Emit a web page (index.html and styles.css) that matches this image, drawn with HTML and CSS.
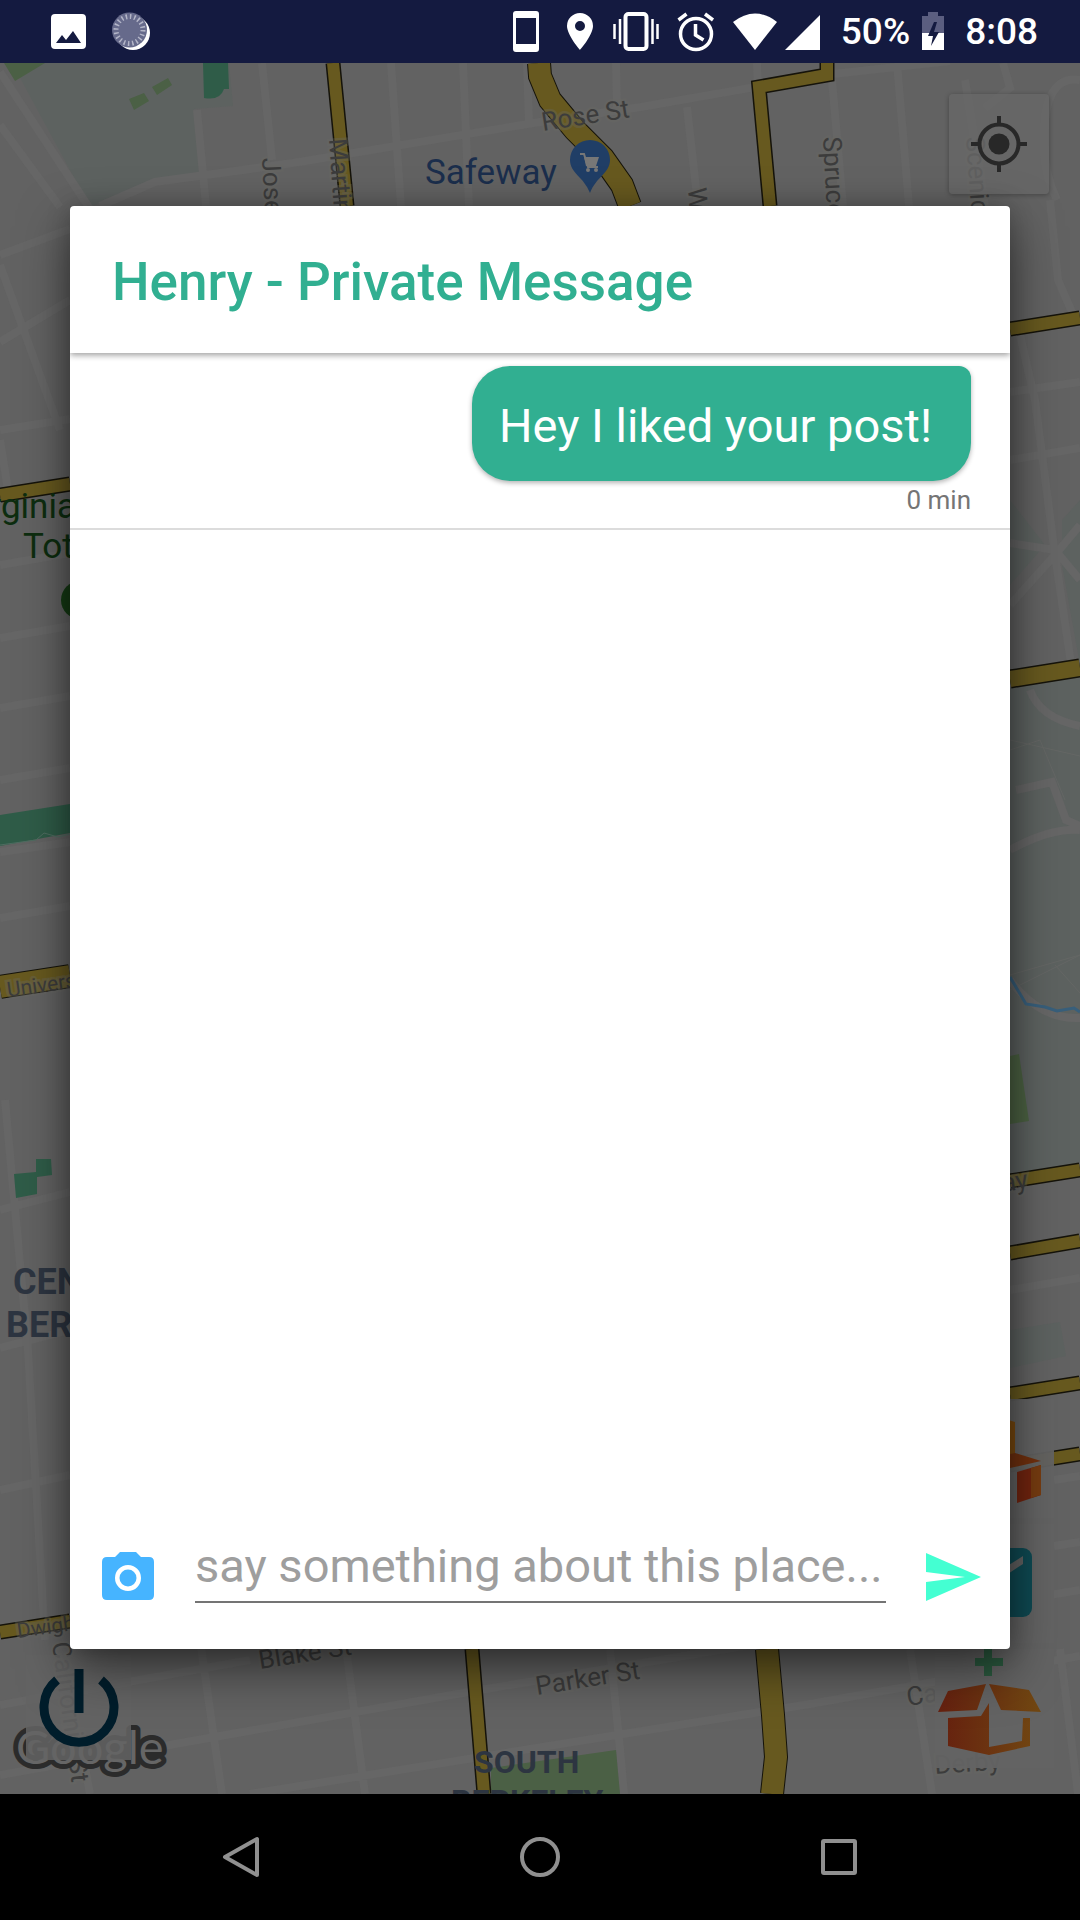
FILE: index.html
```html
<!DOCTYPE html>
<html lang="en">
<head>
<meta charset="utf-8">
<meta name="viewport" content="width=device-width, initial-scale=1">
<title>Henry - Private Message</title>
<link rel="stylesheet" href="styles.css">
</head>
<body>
<header class="status">
  <div class="status-group status-left">
    <svg width="36" height="63" viewBox="51 0 36 63" aria-hidden="true"><path fill="#fff" fill-rule="evenodd" d="M55 14h27q4 0 4 4v27q0 4-4 4H55q-4 0-4-4V18q0-4 4-4zM56 43h25L73 31l-7 9-4-5z"/></svg>
    <svg width="40" height="63" viewBox="112 0 40 63" aria-hidden="true"><circle cx="133" cy="33" r="17" fill="#fff"/><circle cx="129.500" cy="30" r="17.500" fill="#666a8b"/><circle cx="129.500" cy="30" r="13.500" fill="none" stroke="#b4b6c8" stroke-width="5" stroke-dasharray="1.500 2.740"/></svg>
  </div>
  <div class="status-group status-right">
    <div class="status-group status-icons">
      <svg width="42" height="63" viewBox="505 0 42 63" aria-hidden="true"><path fill="#fff" fill-rule="evenodd" d="M516 11h20q3 0 3 3v35q0 3-3 3h-20q-3 0-3-3V14q0-3 3-3zM516 18v26h20V18z"/></svg>
      <svg width="42" height="63" viewBox="559 0 42 63" aria-hidden="true"><path fill="#fff" fill-rule="evenodd" d="M580 13a13 13 0 0 1 13 13c0 9-13 24-13 24s-13-15-13-24a13 13 0 0 1 13-13zM580 21a5 5 0 1 0 0 10 5 5 0 0 0 0-10z"/></svg>
      <svg width="46" height="63" viewBox="613 0 46 63" aria-hidden="true"><rect x="625.500" y="14" width="21" height="35" rx="3" fill="none" stroke="#fff" stroke-width="4"/><path stroke="#fff" stroke-width="2.500" d="M620 19v25M614.500 24v15M652.500 19v25M657.500 24v15"/></svg>
      <svg width="50" height="63" viewBox="671 0 50 63" aria-hidden="true"><g fill="none" stroke="#fff" stroke-width="3.500"><circle cx="696" cy="34" r="15.500"/><path d="M695.500 24v11l8 5M678.500 20l8-6M713 20l-8-6"/></g></svg>
      <div class="status-group status-signal">
        <svg width="44" height="63" viewBox="733 0 44 63" aria-hidden="true"><path fill="#fff" d="M733 22q22-17 44 0l-22 28z"/></svg>
        <svg width="35" height="63" viewBox="785 0 35 63" aria-hidden="true"><path fill="#fff" d="M820 15v35h-35z"/></svg>
      </div>
    </div>
    <div class="status-group status-battery">
      <span>50%</span>
      <svg width="22" height="63" viewBox="923 0 22 63" aria-hidden="true"><path fill="#5b5e80" d="M929 12h10v4h6v17h-22V16h6z"/><path fill="#fff" d="M923 33h22v17h-22z"/><path fill="#141a40" d="M935 22l-6 14h5l-2 10 8-14h-5l3-10z"/></svg>
    </div>
    <time>8:08</time>
  </div>
</header>

<main class="stage">
  <svg class="map" viewBox="0 63 1080 1731" preserveAspectRatio="xMidYMid slice" aria-hidden="true">
    <!-- parks -->
    <g fill="#5d6260">
      <path d="M12 63h217l4 43-39 3 9 62-52 10-61 26z"/>
      <path d="M1010 500l35 45-35 40zM1062 520l18-20v165l-18-100zM1010 688l70-11v486l-70 12z"/>
      <path d="M1010 1330l50-8 6 34-56 12z"/>
    </g>
    <!-- streets -->
    <g class="streets">
      <path d="M0 72l92 140M0 125l60 82M262 63l10 97M391 63l10 143M463 63l6 143M527 63l2 60M100 206l55-24 138-19 247-41 101-15 183-32 126-14M197 110l9 96M616 63l1 44M687 107l11 99M757 63l1 30M832 80l11 126M897 63l12 143M965 80l20 126M1003 63l7 25-25 20M1080 80q-30-5-35 40t12 80"/>
      <path d="M0 255l70-26M0 342l70-42M0 265l60 165M0 430l70-11M0 440l8 50M0 565l70-12M0 638l70-12M0 708l70-12M0 780l70-12M0 852l70-10M0 918l70-12M5 1100l23 250 17 290M0 1210l70-18M0 1348l70-18M0 1490l70-15"/>
      <path d="M1050 200l8 80 14 32M1020 335l15 65 20 155 17 115M1010 392l70-10M1010 460l70-12M1010 605l45-50 25-30M1010 543l45 7 25 30M1030 690q10 28 50 36M1010 850q40-22 70-20M1016 790l36-8 14 38 14 6M1010 980q30 40 70 38M1010 1290l70-12M1054 1480l26-4M1054 1546l26-4"/>
      <path d="M0 1705l250-45M0 1775l480-85 600-100M250 1794l560-90 270-48M200 1640l22 154M345 1640l20 154M610 1649l10 100 4 45M910 1649l22 145M1060 1649l18 145M80 1740l10 54"/>
    </g>
    <g fill="none" stroke="#656765" stroke-width="1"><path d="M1010 740l70 16M1010 750l30-10 25 60M1010 975l70-20M1010 990l70-35M1055 965l25 28"/></g>
    <!-- green areas -->
    <path fill="#4b6045" d="M4 63h41l-30 18zM129 99l15-6 5 8-15 9zM152 87l16-9 4 7-15 10zM491 1768l125-18 4 44H491z"/>
    <path fill="#4c6243" d="M1010 1056l9-2 10 67-19 3z"/>
    <path fill="#2f5c48" d="M203 63h25l1 26h-5q-4 12-20 9zM0 815l70-11v29l-70 13zM14 1174l22-2v-13h15l1 16-15 2v17l-21 4z"/>
    <path fill="none" stroke="#4f6d61" d="M0 845l36-5 8-7 14 4 12-3"/>
    <path fill="none" stroke="#385f7b" stroke-width="3" d="M1010 977l16 27 19 3 12 4 17-3 6 4"/>
    <!-- arterials: dark casing, then fill -->
    <g class="casing">
      <path class="w14" d="M333 63l14 143M827 63v12l-68 12 11 119M0 495l70-11M0 1632l70-11M1010 329l70-11M1010 1181l70-11M1010 1253l70-12M1010 1394l70-11M1010 1465l70-11M472 1649l12 145"/>
      <path class="w22" d="M539 63l1 13 10 24 25 30 28 28 19 27 8 21M0 987l70-11M767 1649l6 66 3 42-4 37"/>
      <path class="w18" d="M1010 679l70-11"/>
    </g>
    <g class="arterial">
      <path class="w14" d="M333 63l14 143M827 63v12l-68 12 11 119M0 495l70-11M0 1632l70-11M1010 329l70-11M1010 1181l70-11M1010 1253l70-12M1010 1394l70-11M1010 1465l70-11M472 1649l12 145"/>
      <path class="w22" d="M539 63l1 13 10 24 25 30 28 28 19 27 8 21M0 987l70-11M767 1649l6 66 3 42-4 37"/>
      <path class="w18" d="M1010 679l70-11"/>
    </g>
    <!-- street names -->
    <g class="street-name">
      <text transform="translate(543 131) rotate(-9)">Rose St</text>
      <text transform="translate(262 158) rotate(87)">Josephine St</text>
      <text transform="translate(329 139) rotate(86)">Martin Luther</text>
      <text transform="translate(823 137) rotate(87)">Spruce St</text>
      <text transform="translate(688 188) rotate(86)">Walnut St</text>
      <text transform="translate(966 137) rotate(86)">Scenic</text>
      <text class="small" transform="translate(8 997) rotate(-8)">University</text>
      <text class="small" transform="translate(18 1638) rotate(-8)">Dwight Way</text>
      <text transform="translate(52 1643) rotate(82)">California St</text>
      <text transform="translate(260 1669) rotate(-9)">Blake St</text>
      <text transform="translate(537 1695) rotate(-9)">Parker St</text>
      <text transform="translate(908 1706) rotate(-9)">C<tspan fill="#5c5c5c">a</tspan></text>
      <text transform="translate(935 1774) rotate(-4)">Derby</text>
      <text transform="translate(1003 1192) rotate(-9)">ay</text>
    </g>
    <g class="place">
      <text class="shop" x="425" y="184">Safeway</text>
      <text class="garden" x="76" y="518" text-anchor="end">Virginia</text>
      <text class="garden" x="23" y="558">Tot Lot</text>
      <text class="district" x="13" y="1294">CENTRAL</text>
      <text class="district" x="6" y="1337">BERKELEY</text>
      <text class="district compact" x="474" y="1773">SOUTH</text>
      <text class="district compact" x="451" y="1812">BERKELEY</text>
    </g>
    <circle cx="80" cy="600" r="19" fill="#153b14"/>
    <path fill="#203e66" d="M590 140a20 20 0 0 1 20 20c0 13-14 17-20 33-6-16-20-20-20-33a20 20 0 0 1 20-20z"/>
    <path fill="#777" d="M584 157h15l-3 9h-10z"/><path fill="none" stroke="#777" stroke-width="2" d="M580 154h4l4 13h10"/><circle cx="588" cy="170" r="2" fill="#777"/><circle cx="596" cy="170" r="2" fill="#777"/>
    <text class="brand" x="16" y="1764">Google</text>
  </svg>

  <button class="map-button locate" type="button" aria-label="My location">
    <svg width="56" height="56" viewBox="-28 -28 56 56"><circle r="19.500" fill="none" stroke="#282828" stroke-width="4"/><circle r="10.500" fill="#282828"/><path stroke="#282828" stroke-width="4" d="M0-28v9M0 28v-9M-28 0h9M28 0h-9"/></svg>
  </button>
  <button class="map-button power" type="button" aria-label="Log out">
    <svg width="80" height="80" viewBox="-40 -40 80 80"><path fill="none" stroke="#001d2b" stroke-width="9" d="M-22-28a35 35 0 1 0 44 0M0-39V5"/></svg>
  </button>
  <div class="map-actions">
    <button class="map-button" type="button" aria-label="Parcels">
      <svg width="119" height="119" viewBox="935 1398 119 119"><path fill="#7a4a10" d="M966 1421l22-8 27 8v32h-49z"/><path fill="#70300e" d="M989 1458l26-6 26 8-31 7z"/><path fill="#70240f" d="M1017 1471l24-7v30l-24 8z"/><path fill="#753b10" d="M1031 1467l10-3v30l-10 3z"/><path fill="#66220f" d="M937 1460l70 8v34l-70-10z"/></svg>
    </button>
    <button class="map-button" type="button" aria-label="Messages">
      <svg width="119" height="119" viewBox="935 1523 119 119"><rect x="945" y="1547" width="87" height="69" rx="9" fill="#0f4a53"/><path fill="#626262" d="M954 1555l34 22 35-22v8l-35 23-34-23z"/></svg>
    </button>
    <button class="map-button" type="button" aria-label="Add parcel">
      <svg width="119" height="119" viewBox="935 1649 119 119">
        <defs><linearGradient id="parcel"><stop offset="0" stop-color="#66200f"/><stop offset="1" stop-color="#714812"/></linearGradient></defs>
        <path fill="#2b5a3f" d="M984 1648h8v10h11v8h-11v10h-8v-10h-9v-8h9z"/>
        <path fill="url(#parcel)" d="M938 1712l10-21 38-7-9 26zM989 1684l40 6 12 22-40-2zM948 1718l33-2 8-13v44l33-6 1-23h7v28l-41 9-41-9z"/>
      </svg>
    </button>
  </div>

  <section class="dialog" role="dialog" aria-labelledby="dialog-title">
    <h1 class="dialog-title" id="dialog-title">Henry - Private Message</h1>
    <ol class="messages">
      <li class="message">
        <p class="bubble">Hey I liked your post!</p>
        <time class="age">0 min</time>
      </li>
    </ol>
    <form class="composer">
      <button class="icon-button" type="button" aria-label="Attach photo">
        <svg width="54" height="50" viewBox="0 0 54 50"><path fill="#46b4ff" fill-rule="evenodd" d="M19 0h16l5 5h8q5 0 5 5v33q0 5-5 5H6q-5 0-5-5V10q0-5 5-5h8zM27 13a13 13 0 1 0 0 26 13 13 0 0 0 0-26z"/><circle cx="27" cy="26" r="8.500" fill="#46b4ff"/></svg>
      </button>
      <input class="entry" type="text" aria-label="Message" placeholder="say something about this place...">
      <button class="icon-button" type="submit" aria-label="Send">
        <svg width="56" height="50" viewBox="0 0 56 50"><path fill="#44ffd2" d="M1 1l55 24L1 49V30l39-5-39-5z"/></svg>
      </button>
    </form>
  </section>
</main>

<nav class="system-nav" aria-label="System">
  <button type="button" aria-label="Back"><svg width="40" height="44" viewBox="0 0 40 44"><path fill="none" stroke="#909090" stroke-width="4" stroke-linejoin="round" d="M36 4v36L4 22z"/></svg></button>
  <button type="button" aria-label="Home"><svg width="44" height="44" viewBox="0 0 44 44"><circle cx="22" cy="22" r="18" fill="none" stroke="#909090" stroke-width="4"/></svg></button>
  <button type="button" aria-label="Recent apps"><svg width="40" height="40" viewBox="0 0 40 40"><rect x="4" y="4" width="32" height="32" rx="1" fill="none" stroke="#909090" stroke-width="4"/></svg></button>
</nav>
</body>
</html>
```
FILE: styles.css
```css
* { box-sizing: border-box; }

body {
  margin: 0;
  min-height: 100vh;
  display: flex;
  flex-direction: column;
  font-family: Roboto, "Liberation Sans", sans-serif;
  background: #000;
}

button {
  margin: 0;
  padding: 0;
  border: 0;
  background: none;
  display: grid;
  place-items: center;
}

svg { display: block; }

/* Status bar */
.status {
  display: flex;
  justify-content: space-between;
  height: 63px;
  padding: 0 42px 0 51px;
  background: #141a40;
  color: #fff;
  font-size: 37px;
  font-weight: 500;
  line-height: 66px;
}
.status-group { display: flex; align-items: center; height: 63px; }
.status-left { gap: 25px; }
.status-right { gap: 21px; }
.status-icons, .status-battery { gap: 12px; }
.status-signal { gap: 8px; }

/* Map behind the dialog */
.stage {
  position: relative;
  flex: 1;
  display: flex;
  padding: 143px 70px 145px;
  overflow: hidden;
  background: #626262;
}
.map {
  position: absolute;
  inset: 0;
  width: 100%;
  height: 100%;
}
.streets { fill: none; stroke: #666; stroke-width: 8px; }
.casing { fill: none; stroke: #15130a; }
.casing .w14 { stroke-width: 15px; }
.casing .w18 { stroke-width: 19px; }
.casing .w22 { stroke-width: 24px; }
.arterial { fill: none; stroke: #67591f; }
.arterial .w14 { stroke-width: 12px; }
.arterial .w18 { stroke-width: 16px; }
.arterial .w22 { stroke-width: 22px; }
.street-name {
  fill: #3c3c3c;
  font-size: 26px;
  stroke: rgba(104, 104, 98, .35);
  stroke-width: 5px;
  paint-order: stroke;
}
.street-name .small { font-size: 21px; }
.place { font-size: 35px; }
.shop { fill: #1b2e4c; }
.garden { fill: #0d2d0f; }
.district { fill: #2d3541; font-size: 36px; font-weight: 700; }
.district.compact { font-size: 32px; }
.brand {
  fill: #666;
  stroke: #2b2b2b;
  stroke-width: 10px;
  stroke-linejoin: round;
  paint-order: stroke;
  font-family: Lato, sans-serif;
  font-size: 47px;
}

.map-button {
  width: 119px;
  height: 119px;
  background: rgba(99, 99, 99, .95);
}
.map-button.locate {
  position: absolute;
  top: 31px;
  right: 31px;
  width: 100px;
  height: 100px;
  border-radius: 4px;
  background: rgba(104, 104, 104, .8);
  box-shadow: 0 1px 5px rgba(0, 0, 0, .3);
}
.map-button.power {
  position: absolute;
  left: 26px;
  bottom: 34px;
  width: 105px;
  height: 105px;
  background: rgba(100, 100, 100, .85);
}
.map-actions {
  position: absolute;
  right: 26px;
  bottom: 26px;
  display: flex;
  flex-direction: column;
  gap: 6px;
}

/* Dialog */
.dialog {
  position: relative;
  flex: 1;
  display: flex;
  flex-direction: column;
  min-width: 0;
  border-radius: 4px;
  background: #fff;
  box-shadow: 0 20px 50px rgba(0, 0, 0, .5), 0 0 24px rgba(0, 0, 0, .2);
}
.dialog-title {
  margin: 0;
  padding: 45px 42px 39px;
  border-radius: 4px 4px 0 0;
  color: #31af91;
  font-size: 53px;
  font-weight: 500;
  line-height: 63px;
  box-shadow: 0 2px 6px rgba(0, 0, 0, .4);
  clip-path: inset(0 0 -12px 0);
}
.messages {
  flex: 1;
  margin: 0;
  padding: 0;
  list-style: none;
}
.message {
  display: flex;
  flex-direction: column;
  align-items: flex-end;
  padding: 13px 39px 12px;
  border-bottom: 2px solid #dcdcdc;
}
.bubble {
  margin: 0;
  padding: 32px 39px 27px 27px;
  border-radius: 38px 12px 38px 38px;
  background: #31af91;
  color: #fff;
  font-size: 47px;
  line-height: 56px;
  box-shadow: 0 2px 5px rgba(0, 0, 0, .3);
}
.age {
  padding-top: 3px;
  color: #757575;
  font-size: 26px;
  line-height: 32px;
}
.composer {
  display: flex;
  align-items: flex-end;
  gap: 39px;
  padding: 0 29px 36px 30px;
}
.icon-button { width: 56px; height: 72px; }
.entry {
  flex: 1;
  min-width: 0;
  height: 66px;
  margin: 0 0 10px;
  padding: 0 0 8px;
  border: 0;
  border-bottom: 2px solid #747474;
  background: none;
  color: #212121;
  font-family: inherit;
  font-size: 47px;
}
.entry::placeholder { color: #9e9e9e; opacity: 1; }

/* System navigation */
.system-nav {
  display: flex;
  height: 126px;
  padding: 0 92px;
  background: #000;
}
.system-nav button { flex: 1; }
```
